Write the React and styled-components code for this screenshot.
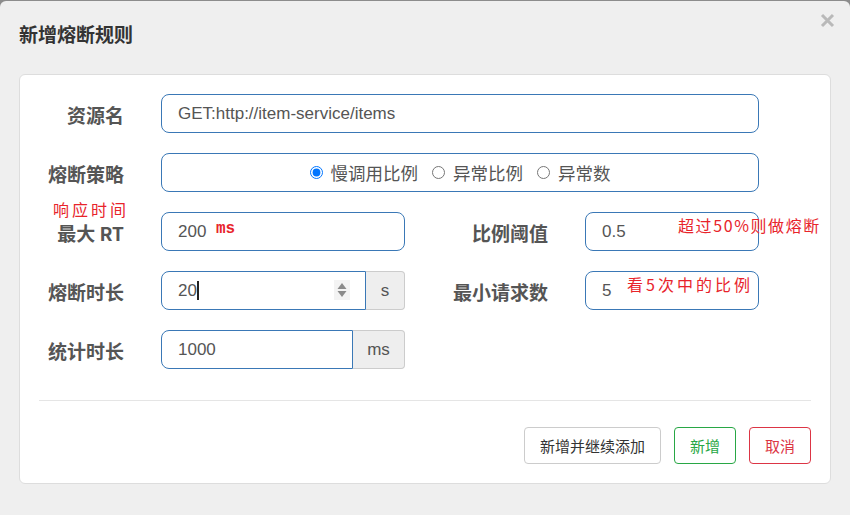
import React from "react";
import styled, { createGlobalStyle } from "styled-components";

const GlobalStyle = createGlobalStyle`
  html, body {
    margin: 0;
    padding: 0;
    background: #8c8c8c;
  }
  body {
    font-family: "Liberation Sans", "Noto Sans CJK SC", sans-serif;
    overflow: hidden;
  }
  * {
    box-sizing: border-box;
  }
`;

const Modal = styled.div`
  width: 850px;
  height: 514px;
  margin-top: 1px;
  padding: 0 19px;
  background: #efefef;
  border-radius: 6px 6px 0 0;
`;

const Header = styled.div`
  display: flex;
  justify-content: space-between;
  align-items: flex-start;
  height: 73px;
`;

const Title = styled.h4`
  margin: 21px 0 0;
  font-family: "Noto Sans CJK SC", sans-serif;
  font-size: 19px;
  line-height: 24px;
  font-weight: 700;
  color: #333;
`;

const Close = styled.button`
  margin: 12px -4px 0 0;
  padding: 0;
  width: 15px;
  height: 15px;
  border: 0;
  background: none;
  cursor: pointer;
  display: flex;
`;

const Panel = styled.div`
  background: #fff;
  border: 1px solid #ddd;
  border-radius: 6px;
  padding: 19px 0 19px;
`;

const Form = styled.div`
  display: flex;
  flex-direction: column;
  gap: 20px;
`;

const Row = styled.div`
  display: flex;
  align-items: center;
  height: 39px;
`;

const Label = styled.label`
  position: relative;
  flex-shrink: 0;
  width: ${(p) => p.$width || 104}px;
  margin-right: 37px;
  padding-top: 2px;
  text-align: right;
  font-family: "Noto Sans CJK SC", sans-serif;
  font-size: 19px;
  font-weight: 700;
  color: #555;
  white-space: nowrap;
`;

const Field = styled.div`
  position: relative;
  display: flex;
  width: ${(p) => p.$width}px;
  height: 39px;
  flex-shrink: 0;
`;

const Input = styled.input`
  flex: 1;
  min-width: 0;
  height: 39px;
  padding: 0 16px;
  border: 1px solid #3a78b6;
  border-radius: ${(p) => (p.$grouped ? "8px 0 0 8px" : "8px")};
  background: #fff;
  font-family: "Liberation Sans", sans-serif;
  font-size: 17px;
  color: #555;
  outline: none;
`;

const Addon = styled.span`
  display: flex;
  align-items: center;
  justify-content: center;
  width: ${(p) => p.$width}px;
  flex-shrink: 0;
  background: #eee;
  border: 1px solid #ccc;
  border-left: 0;
  border-radius: 0 4px 4px 0;
  font-family: "Liberation Sans", sans-serif;
  font-size: 17px;
  color: #555;
`;

const Spinner = styled.span`
  position: absolute;
  top: 9px;
  right: ${(p) => p.$right}px;
  width: 16px;
  height: 20px;
  background: #f3f3f3;
  display: flex;
  align-items: center;
  justify-content: center;
`;

const Caret = styled.span`
  position: absolute;
  top: 10px;
  left: ${(p) => p.$left}px;
  width: 2px;
  height: 19px;
  background: #222;
`;

const RadioBox = styled.div`
  display: flex;
  align-items: center;
  justify-content: center;
  gap: 14px;
  width: 598px;
  height: 39px;
  border: 1px solid #3a78b6;
  border-radius: 8px;
`;

const RadioOption = styled.label`
  display: flex;
  align-items: center;
  gap: 8px;
  font-family: "Noto Sans CJK SC", sans-serif;
  font-size: 17.5px;
  color: #555;

  input {
    margin: 0;
    width: 13px;
    height: 13px;
  }
`;

const Note = styled.span`
  position: absolute;
  top: ${(p) => p.$top}px;
  left: ${(p) => p.$left}px;
  font-family: "Noto Sans CJK SC", sans-serif;
  font-size: 16px;
  font-weight: 400;
  line-height: 18px;
  letter-spacing: ${(p) => p.$spacing || 0}px;
  color: #e8242b;
  white-space: nowrap;
  pointer-events: none;
`;

const UnitNote = styled.span`
  position: absolute;
  top: 8px;
  left: 55px;
  font-family: "Liberation Mono", monospace;
  font-size: 16px;
  font-weight: 700;
  line-height: 18px;
  color: #e8242b;
`;

const Footer = styled.div`
  display: flex;
  justify-content: flex-end;
  gap: 13px;
  margin: 31px 19px 0 19px;
  padding-top: 26px;
  border-top: 1px solid #e5e5e5;
`;

const Button = styled.button`
  height: 37px;
  padding: 0 15px;
  background: #fff;
  border: 1px solid ${(p) => p.$color || "#ccc"};
  border-radius: 4px;
  font-family: "Noto Sans CJK SC", sans-serif;
  font-size: 15px;
  color: ${(p) => p.$color || "#333"};
  cursor: pointer;
`;

function CloseIcon() {
  return (
    <svg width="15" height="15" viewBox="0 0 15 15">
      <path d="M2 2 L13 13 M13 2 L2 13" stroke="#b9b9b9" strokeWidth="3" />
    </svg>
  );
}

function SpinArrows() {
  return (
    <svg width="10" height="18" viewBox="0 0 10 18">
      <path d="M5 2 L9.5 8 L0.5 8 Z" fill="#8a8a8a" />
      <path d="M0.5 10 L9.5 10 L5 16 Z" fill="#8a8a8a" />
    </svg>
  );
}

export default function App() {
  return (
    <>
      <GlobalStyle />
      <Modal>
        <Header>
          <Title>新增熔断规则</Title>
          <Close aria-label="close">
            <CloseIcon />
          </Close>
        </Header>
        <Panel>
          <Form>
            <Row>
              <Label>资源名</Label>
              <Field $width={598}>
                <Input readOnly value="GET:http://item-service/items" />
              </Field>
            </Row>
            <Row>
              <Label>熔断策略</Label>
              <RadioBox>
                <RadioOption>
                  <input type="radio" name="grade" defaultChecked />
                  慢调用比例
                </RadioOption>
                <RadioOption>
                  <input type="radio" name="grade" />
                  异常比例
                </RadioOption>
                <RadioOption>
                  <input type="radio" name="grade" />
                  异常数
                </RadioOption>
              </RadioBox>
            </Row>
            <Row>
              <Label>
                <Note $top={-17} $left={33} $spacing={3}>
                  响应时间
                </Note>
                最大 RT
              </Label>
              <Field $width={244}>
                <Input readOnly value="200" />
                <UnitNote>ms</UnitNote>
              </Field>
              <Label $width={143}>比例阈值</Label>
              <Field $width={174}>
                <Input readOnly value="0.5" />
                <Note $top={4} $left={93} $spacing={1.6}>
                  超过50%则做熔断
                </Note>
              </Field>
            </Row>
            <Row>
              <Label>熔断时长</Label>
              <Field $width={244}>
                <Input $grouped readOnly value="20" />
                <Caret $left={36} />
                <Spinner $right={55}>
                  <SpinArrows />
                </Spinner>
                <Addon $width={39}>s</Addon>
              </Field>
              <Label $width={143}>最小请求数</Label>
              <Field $width={174}>
                <Input readOnly value="5" />
                <Note $top={4} $left={42} $spacing={3}>
                  看5次中的比例
                </Note>
              </Field>
            </Row>
            <Row>
              <Label>统计时长</Label>
              <Field $width={244}>
                <Input $grouped readOnly value="1000" />
                <Addon $width={52}>ms</Addon>
              </Field>
            </Row>
          </Form>
          <Footer>
            <Button>新增并继续添加</Button>
            <Button $color="#28a745">新增</Button>
            <Button $color="#dc3545">取消</Button>
          </Footer>
        </Panel>
      </Modal>
    </>
  );
}
